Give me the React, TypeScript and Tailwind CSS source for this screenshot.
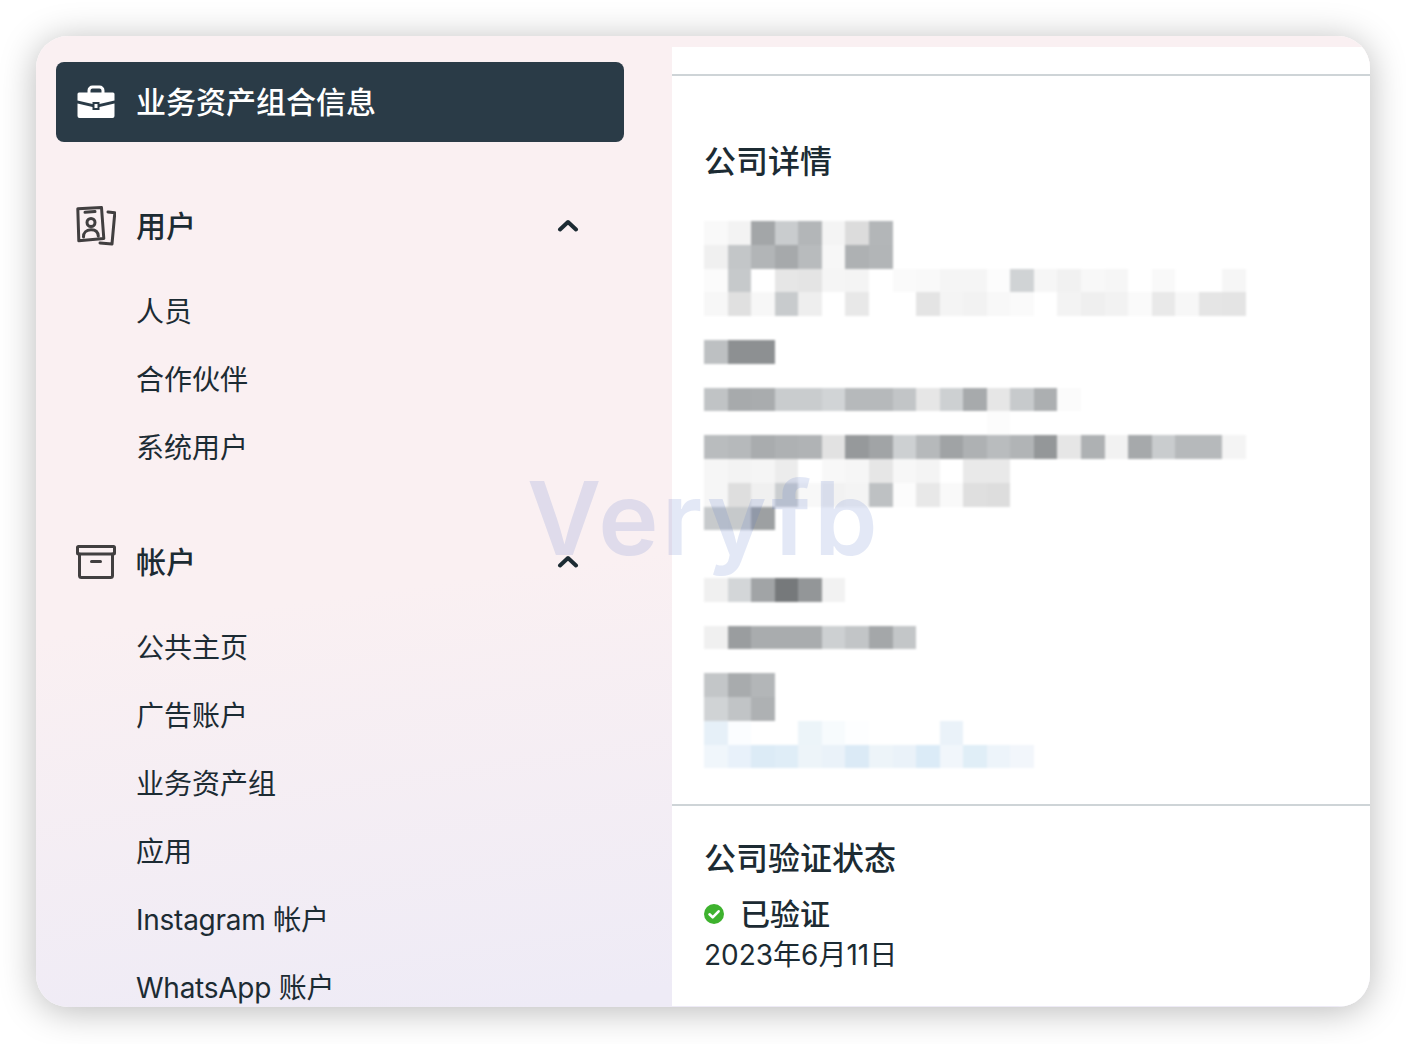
import React from "react";

const tint = (v: number) => {
  if (v >= 0xfd) return "#ffffff";
  const c = (n: number) => Math.max(0, Math.min(255, n)).toString(16).padStart(2, "0");
  return v < 0xd8 ? "#" + c(v - 2) + c(v + 1) + c(v + 3) : "#" + c(v) + c(v) + c(v);
};
const g = (s: string) => s.split(" ").map((h) => tint(parseInt(h, 16)));
const rows: string[][] = [
  g("f9 f3 a5 cb b5 f4 dc b5"),
  g("f0 c5 b4 a8 ba f7 b0 b4"),
  g("fb c8 fe e6 e4 f5 f4 ff fa f9 f5 f5 fc d2 f6 f1 f8 f6 fe f9 ff fe f6"),
  g("f7 e0 f7 ca ee ff e8 fd fd e4 f4 f2 f8 fa ff f3 ef f2 fa e9 f7 e5 e4"),
  [],
  g("bf 8f 8f"),
  [],
  g("c2 a9 ab cb cb d3 b8 b8 c4 e6 cf a9 e6 c9 ae fb"),
  g("ff ff ff ff ff ff ff ff ff ff ff ff fc"),
  g("bb b8 ab b0 b2 e2 98 a3 cf b8 a2 b0 bb b3 96 e6 b0 f2 a8 cb b8 b8 f4"),
  g("f6 f3 f5 ec fe f8 f6 e6 f7 f4 fe e9 e9"),
  g("f6 de f0 cd f8 f2 f4 c0 fc e8 f9 df dd"),
  g("c9 c8 9f"),
  [],
  [],
  g("f0 d5 a3 78 95 f2"),
  [],
  g("f0 9c ab ab ab cf c4 a6 c5"),
  [],
  g("c5 aa b5"),
  g("d2 c3 b0"),
  ["#e6f0f8", "#fbfdff", "#ffffff", "#ffffff", "#ecf4f9", "#f7fbfd", "#fdfeff", "#ffffff", "#ffffff", "#ffffff", "#eaf2f9"],
  ["#f0f6fb", "#e8f1fa", "#dcebf6", "#dfedf7", "#edf4f9", "#eaf2f9", "#dbeaf6", "#edf4f9", "#eaf2f9", "#dbebf7", "#f1f6fb", "#e0eef7", "#edf4fa", "#f2f6fb"],
];

function Briefcase() {
  return (
    <svg width="40" height="34" viewBox="0 0 40 34" className="shrink-0">
      <path d="M13 8V5.500A3.500 3.500 0 0 1 16.500 2h7A3.500 3.500 0 0 1 27 5.500V8" fill="none" stroke="#fff" strokeWidth="3" />
      <path d="M3 7.500h34A1.500 1.500 0 0 1 38.500 9v6.500L23.500 19v-2h-7v2L1.500 15.500V9A1.500 1.500 0 0 1 3 7.500Z" fill="#fff" />
      <path d="M1.500 18.500 16.500 22v3h7v-3l15-3.500V31a2 2 0 0 1-2 2h-33a2 2 0 0 1-2-2Z" fill="#fff" />
      <rect x="18.500" y="19" width="3" height="4" fill="#fff" />
    </svg>
  );
}

function IdCards() {
  return (
    <svg width="40" height="40" viewBox="0 0 40 40" fill="none" stroke="#413f40" strokeWidth="3" strokeLinecap="round" strokeLinejoin="round" className="shrink-0">
      <path d="M1.800 2.800 25.500 1.500 27.800 32.500 2.800 34.800Z" />
      <path d="M9 6.300 19 5.500" />
      <circle cx="15" cy="16.500" r="4" />
      <path d="M7.500 31c-.2-4.500 3-7 7.300-7.200 4.300-.2 7.200 2 7.500 6.400" />
      <path d="M32 6l6.800.8L36 38 24 37" />
    </svg>
  );
}

function Archive() {
  return (
    <svg width="40" height="34" viewBox="0 0 40 34" fill="none" stroke="#413f40" strokeWidth="3" strokeLinecap="round" strokeLinejoin="round" className="shrink-0">
      <rect x="1.500" y="1.500" width="37" height="7.500" rx="1" />
      <path d="M3.500 9v21.500a2 2 0 0 0 2 2h29a2 2 0 0 0 2-2V9" />
      <path d="M15.500 16.500h9" />
    </svg>
  );
}

function Chevron() {
  return (
    <svg width="22" height="14" viewBox="0 0 22 14" fill="none" stroke="#1c2b33" strokeWidth="4" strokeLinecap="round" strokeLinejoin="round">
      <path d="M3 11.500 11 4l8 7.500" />
    </svg>
  );
}

function Section({ icon, title, items, className }: { icon: React.ReactNode; title: string; items: string[]; className: string }) {
  return (
    <div className={className}>
      <div className="ml-[40px] flex h-[68px] items-center">
        <div className="flex w-[60px] items-center">{icon}</div>
        <span className="text-[30px] font-medium leading-none text-[#1c2b33]">{title}</span>
        <div className="mr-[93px] mb-[2px] ml-auto flex"><Chevron /></div>
      </div>
      <div className="mt-[17px] flex flex-col">
        {items.map((t) => (
          <div key={t} className={/[A-Za-z]/.test(t) ? "flex h-[68px] items-center pt-[2px] pl-[100px] text-[28px] leading-none tracking-[-0.25px] whitespace-nowrap text-[#1c2b33]" : "flex h-[68px] items-center pt-[2px] pl-[100px] text-[28px] leading-none whitespace-nowrap text-[#1c2b33]"}>{t}</div>
        ))}
      </div>
    </div>
  );
}

export default function App() {
  return (
    <div className="h-[1044px] w-[1406px] overflow-hidden bg-white pt-[36px] pl-[36px] font-[Inter,'Noto_Sans_CJK_SC',sans-serif]">
      <div className="relative flex h-[971px] w-[1334px] overflow-hidden rounded-[32px] bg-[linear-gradient(172deg,#faf0f2_0%,#faf0f2_52%,#eeebf6_90%,#eeebf6_100%)] shadow-[0_4px_36px_rgba(0,0,0,0.28)]">
        <aside className="h-full w-[636px] shrink-0 overflow-hidden pt-[26px]">
          <div className="ml-[20px] flex h-[80px] w-[568px] items-center rounded-[8px] bg-[#2a3b47] pl-[20px]">
            <div className="flex w-[60px] items-center"><Briefcase /></div>
            <span className="text-[30px] font-medium leading-none text-white">业务资产组合信息</span>
          </div>
          <Section className="mt-[50px]" icon={<IdCards />} title="用户" items={["人员", "合作伙伴", "系统用户"]} />
          <Section className="mt-[47px]" icon={<Archive />} title="帐户" items={["公共主页", "广告账户", "业务资产组", "应用", "Instagram 帐户", "WhatsApp 账户"]} />
        </aside>
        <main className="mt-[11px] mb-[1px] flex flex-1 flex-col bg-white">
          <div className="h-[29px] shrink-0 border-b-2 border-[#ced4d7]" />
          <div className="shrink-0 border-b-2 border-[#ced4d7] pt-[66px] pl-[32px] pb-[11.6px]">
            <h2 className="text-[32px] font-medium leading-[40px] text-[#1c2b33]">公司详情</h2>
            <div className="mt-[39px] flex flex-col blur-[1px]">
              {Array.from({ length: 24 }, (_, r) => (
                <div key={r} className="flex h-[23.8px]">
                  {(rows[r] || []).map((c, i) => (
                    <div key={i} className="h-full w-[23.57px]" style={{ backgroundColor: c }} />
                  ))}
                </div>
              ))}
            </div>
          </div>
          <div className="pt-[33px] pl-[32px]">
            <h2 className="text-[32px] font-medium leading-[40px] text-[#1c2b33]">公司验证状态</h2>
            <div className="mt-[15px] flex h-[40px] items-center">
              <svg width="20" height="20" viewBox="0 0 20 20" className="shrink-0">
                <circle cx="10" cy="10" r="10" fill="#3eb22e" />
                <path d="M5.500 10.300 8.700 13.300 14.600 7.300" fill="none" stroke="#fff" strokeWidth="2.600" strokeLinecap="round" strokeLinejoin="round" />
              </svg>
              <span className="ml-[16px] text-[30px] font-medium leading-none text-[#1c2b33]">已验证</span>
            </div>
            <div className="mt-[1px] text-[28px] leading-[40px] text-[#1c2b33]">2023年6月11日</div>
          </div>
        </main>
        <div className="pointer-events-none absolute top-[421px] left-[491px] font-[Inter,sans-serif] text-[102px] leading-[1.2] font-semibold tracking-[3px] text-[rgba(90,120,200,0.17)]">Veryfb</div>
      </div>
    </div>
  );
}
